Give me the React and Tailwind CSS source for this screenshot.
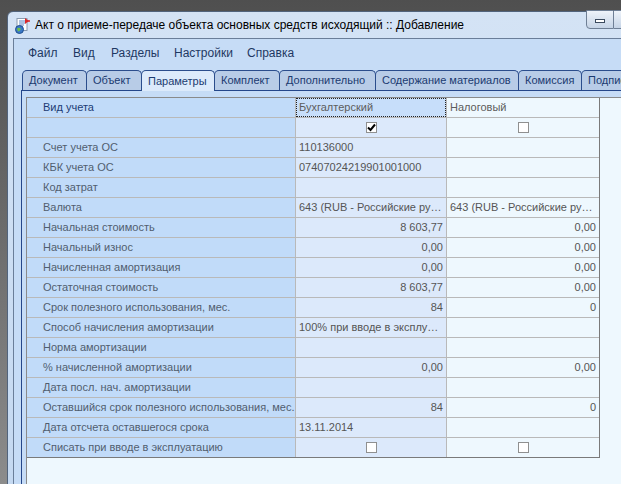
import { Fragment } from "react";

const rows = [
  { label: "Счет учета ОС", a: "110136000", b: "" },
  { label: "КБК учета ОС", a: "07407024219901001000", b: "" },
  { label: "Код затрат", a: "", b: "" },
  { label: "Валюта", a: "643 (RUB - Российские рубли)", b: "643 (RUB - Российские рубли)" },
  { label: "Начальная стоимость", a: "8 603,77", b: "0,00", right: true },
  { label: "Начальный износ", a: "0,00", b: "0,00", right: true },
  { label: "Начисленная амортизация", a: "0,00", b: "0,00", right: true },
  { label: "Остаточная стоимость", a: "8 603,77", b: "0,00", right: true },
  { label: "Срок полезного использования, мес.", a: "84", b: "0", right: true },
  { label: "Способ начисления амортизации", a: "100% при вводе в эксплуатацию", b: "" },
  { label: "Норма амортизации", a: "", b: "" },
  { label: "% начисленной амортизации", a: "0,00", b: "0,00", right: true },
  { label: "Дата посл. нач. амортизации", a: "", b: "" },
  { label: "Оставшийся срок полезного использования, мес.", a: "84", b: "0", right: true },
  { label: "Дата отсчета оставшегося срока", a: "13.11.2014", b: "" },
];

const tabs = [
  { name: "Документ", w: "w-[65px]" },
  { name: "Объект", w: "w-[56px]" },
  { name: "Параметры", w: "w-[74px]", active: true },
  { name: "Комплект", w: "w-[66px]" },
  { name: "Дополнительно", w: "w-[97px]" },
  { name: "Содержание материалов", w: "w-[144px]" },
  { name: "Комиссия", w: "w-[64px]" },
  { name: "Подписи", w: "w-[70px]" },
];

const menu = [
  { name: "Файл", w: "w-[45px]" },
  { name: "Вид", w: "w-[38px]" },
  { name: "Разделы", w: "w-[63px]" },
  { name: "Настройки", w: "w-[73px]" },
  { name: "Справка", w: "w-[60px]" },
];

function CheckBox({ checked }) {
  return (
    <span className="w-[11px] h-[11px] border border-[#8f9090] bg-white flex items-center justify-center">
      {checked && (
        <svg width="9" height="9" viewBox="0 0 9 9">
          <path d="M1 4.5 L3.5 7 L8 1.5" stroke="#000" strokeWidth="2" fill="none" />
        </svg>
      )}
    </span>
  );
}

function AppIcon() {
  return (
    <svg width="17" height="17" viewBox="0 0 17 17">
      <rect x="3" y="1.5" width="10" height="12" fill="#fff" stroke="#8a9bb0" />
      <path d="M5 4h6M5 6h6M5 8h5M5 10h4" stroke="#5b84c4" strokeWidth="1" />
      <path d="M11 1 L15 4 L11 7 Z" fill="#d8282a" />
      <path d="M12 4 H16" stroke="#d8282a" strokeWidth="1.5" />
      <circle cx="5.5" cy="12.5" r="4" fill="#3a78c8" stroke="#1f4f8f" />
      <path d="M3 11.5 Q5 10 7 12 Q6 14 4 14.5" fill="#6fbf4a" />
    </svg>
  );
}

export default function App() {
  return (
    <div className="w-[621px] h-[484px] overflow-hidden bg-gradient-to-b from-[#4f4f4f] to-[#8c8c8c] pl-[7px] pt-[11px] font-['Liberation_Sans',Arial,sans-serif]">
      <div className="relative w-[700px] h-[520px] rounded-tl-[6px] border border-[#52647c] bg-gradient-to-b from-[#d4e3f5] to-[#c3d8f1] flex flex-col">
        <div className="h-[26px] flex items-center pl-[6px]">
          <AppIcon />
          <span className="ml-[4px] text-[12px] text-black">
            Акт о приеме-передаче объекта основных средств исходящий :: Добавление
          </span>
        </div>
        <div className="absolute top-[-2px] left-[578px] flex">
          <div className="w-[28px] h-[19px] rounded-bl-[4px] border border-[#6f7f95] bg-gradient-to-b from-[#eef3fa] to-[#c6d4e6] flex items-center justify-center">
            <span className="w-[10px] h-[4px] border border-[#3b4a5e] bg-white mt-[3px]"></span>
          </div>
          <div className="w-[27px] h-[19px] border-y border-r border-[#6f7f95] bg-gradient-to-b from-[#eef3fa] to-[#c6d4e6]"></div>
        </div>

        <div className="ml-[5px] flex-1 border-l border-t border-[#6a7e99] bg-[#c6dcf6] flex flex-col">
          <div className="h-[27px] flex items-center pl-[14px] text-[12px] text-[#1e3862]">
            {menu.map((m) => (
              <span key={m.name} className={"shrink-0 " + m.w}>
                {m.name}
              </span>
            ))}
          </div>

          <div className="mt-[4px] h-[20px] ml-[8px] flex items-start">
            {tabs.map((t, i) => (
              <div
                key={t.name}
                className={
                  "shrink-0 h-[20px] rounded-t-[5px] border-x border-t border-[#2b4d8c] flex items-center pl-[6px] whitespace-nowrap text-[11px] text-[#1b3a70] " +
                  t.w +
                  (i > 0 ? " -ml-px" : "") +
                  (t.active ? " bg-[#dceafb] h-[21px] relative z-10" : " bg-[#b8cce7]")
                }
              >
                {t.name}
              </div>
            ))}
          </div>

          <div className="ml-[7px] flex-1 border-l border-t border-[#24468a] pt-[6px] pl-[4px]">
            <div className="h-full border-l border-t border-[#8a8a8a] bg-[#eef8fe]">
              <div className="w-[573px] grid grid-cols-[269px_151px_152px] border-r border-b border-[#7a7a7a] text-[11px]">
                <div className="h-[20px] border-b border-r border-[#b9b9b9] bg-[#c1dbf9] pl-[16px] flex items-center text-[#1d3b75]">
                  Вид учета
                </div>
                <div className="h-[20px] border-b border-r border-[#b9b9b9] bg-[#c7defa] flex items-center">
                  <div className="w-full h-[19px] border border-dotted border-[#222] pl-[2px] flex items-center text-[#5d5d5d]">
                    Бухгалтерский
                  </div>
                </div>
                <div className="h-[20px] border-b border-[#b9b9b9] bg-[#eef8fe] pl-[3px] flex items-center text-[#5d5d5d]">
                  Налоговый
                </div>

                <div className="h-[20px] border-b border-r border-[#b9b9b9] bg-[#c1dbf9]"></div>
                <div className="h-[20px] border-b border-r border-[#b9b9b9] bg-[#dce9fb] flex items-center justify-center">
                  <CheckBox checked />
                </div>
                <div className="h-[20px] border-b border-[#b9b9b9] bg-[#eef8fe] flex items-center justify-center">
                  <CheckBox />
                </div>

                {rows.map((r) => (
                  <Fragment key={r.label}>
                    <div className="h-[20px] border-b border-r border-[#b9b9b9] bg-[#c1dbf9] pl-[16px] flex items-center text-[#515e6f] whitespace-nowrap overflow-hidden">
                      {r.label}
                    </div>
                    <div
                      className={
                        "h-[20px] border-b border-r border-[#b9b9b9] bg-[#dce9fb] px-[3px] leading-[19px] text-[#555] whitespace-nowrap overflow-hidden text-ellipsis " +
                        (r.right ? "text-right" : "text-left")
                      }
                    >
                      {r.a}
                    </div>
                    <div
                      className={
                        "h-[20px] border-b border-[#b9b9b9] bg-[#eef8fe] px-[3px] leading-[19px] text-[#555] whitespace-nowrap overflow-hidden text-ellipsis " +
                        (r.right ? "text-right" : "text-left")
                      }
                    >
                      {r.b}
                    </div>
                  </Fragment>
                ))}

                <div className="h-[19px] border-r border-[#b9b9b9] bg-[#c1dbf9] pl-[16px] flex items-center text-[#515e6f]">
                  Списать при вводе в эксплуатацию
                </div>
                <div className="h-[19px] border-r border-[#b9b9b9] bg-[#dce9fb] flex items-center justify-center">
                  <CheckBox />
                </div>
                <div className="h-[19px] bg-[#eef8fe] flex items-center justify-center">
                  <CheckBox />
                </div>
              </div>
            </div>
          </div>
        </div>
      </div>
    </div>
  );
}
